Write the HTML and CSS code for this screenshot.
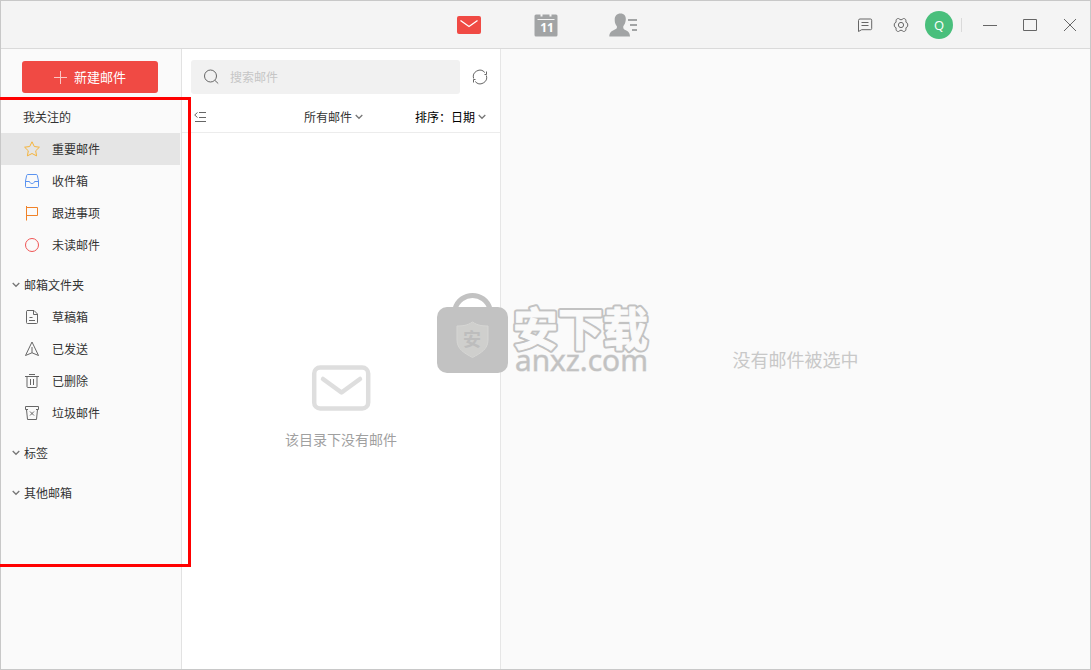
FILE: index.html
```html
<!DOCTYPE html>
<html lang="zh-CN">
<head>
<meta charset="utf-8">
<meta name="viewport" content="width=device-width, initial-scale=1">
<title>邮箱</title>
<link rel="stylesheet" href="styles.css">
</head>
<body>
<div class="window">
  <header class="titlebar">
    <nav class="tabs" aria-label="主导航">
      <button class="tab" aria-label="邮件">
        <svg width="24" height="18" viewBox="0 0 24 18"><rect width="24" height="18" rx="2" fill="#f04a44"/><path d="M3.500 4.500l8.500 6 8.500-6" fill="none" stroke="#fff" stroke-width="1.300"/></svg>
      </button>
      <button class="tab" aria-label="日历">
        <svg width="24" height="24" viewBox="0 0 24 24"><path d="M2 1.500h4.500v2h2v-2h7v2h2v-2H22a1.500 1.500 0 0 1 1.500 1.500v19a1.500 1.500 0 0 1-1.500 1.500H2A1.500 1.500 0 0 1 .5 22V3A1.500 1.500 0 0 1 2 1.500z" fill="#a2a4a5"/><path d="M3.500 6.500h17" stroke="#f4f4f4"/><text class="day" x="13" y="19" text-anchor="middle">11</text></svg>
      </button>
      <button class="tab" aria-label="联系人">
        <svg width="28" height="24" viewBox="0 0 28 24"><path d="M11.500.5c3.700 0 5.700 2.600 5.300 6.300-.2 3-1.500 5.200-2.500 6.500-.3 2.300.5 3 2 3.700 2.800 1.200 4.500 2.500 4.700 6.500H.3c.2-4 2-5.300 4.700-6.500 2-.8 3.300-1.500 2.900-3.700C6.500 11.500 5.700 9.800 5.700 7 5.600 3 7.800.5 11.500.5z" fill="#a2a4a5"/><path d="M19 7H28M21 12H28M23 17H28" stroke="#a2a4a5" stroke-width="2"/></svg>
      </button>
    </nav>
    <div class="actions">
      <button class="tool" aria-label="反馈">
        <svg class="line" width="16" height="16" viewBox="0 0 16 16"><path d="M3 2h10.500a1.200 1.200 0 0 1 1.200 1.200v8.300a1.200 1.200 0 0 1-1.200 1.200H4.700L1.500 14.500V3.500A1.500 1.500 0 0 1 3 2zM4.500 5.500h7M4.500 8.500h7"/></svg>
      </button>
      <button class="tool" aria-label="设置">
        <svg class="line" width="16" height="16" viewBox="0 0 16 16"><path d="M4.600 1.600Q5.500 1.200 6.200 2Q8 3.800 9.800 2Q10.500 1.200 11.400 1.600L12.600 2.400Q13.200 2.900 12.900 3.800Q12.500 5.700 14 6Q14.700 6.200 14.700 7V9Q14.700 9.800 14 10Q12.500 10.300 12.900 12.200Q13.200 13.100 12.600 13.600L11.400 14.400Q10.500 14.800 9.800 14Q8 12.200 6.200 14Q5.500 14.800 4.600 14.400L3.400 13.600Q2.800 13.100 3.100 12.200Q3.500 10.300 2 10Q1.300 9.800 1.300 9V7Q1.300 6.200 2 6Q3.500 5.700 3.100 3.800Q2.800 2.900 3.400 2.400z"/><circle cx="8" cy="8" r="2.600"/></svg>
      </button>
      <button class="avatar" aria-label="账户">Q</button>
      <span class="divider"></span>
      <button class="control" aria-label="最小化"><svg class="line" width="14" height="14" viewBox="0 0 14 14"><path d="M0 7.500h14"/></svg></button>
      <button class="control" aria-label="最大化"><svg class="line" width="14" height="14" viewBox="0 0 14 14"><path d="M.5 1.500h13v11H.5z"/></svg></button>
      <button class="control" aria-label="关闭"><svg class="line" width="14" height="14" viewBox="0 0 14 14"><path d="M1 1l12 12M13 1L1 13"/></svg></button>
    </div>
  </header>

  <div class="body">
    <aside class="sidebar">
      <button class="compose">
        <svg width="13" height="13" viewBox="0 0 13 13"><path d="M0 6.500h13M6.500 0v13" stroke="#fbc6c4"/></svg>
        新建邮件
      </button>

      <section class="group">
        <h2 class="heading pinned">我关注的</h2>
        <ul class="folders">
          <li><a class="folder active" href="#important"><svg class="line star" width="16" height="16" viewBox="0 0 16 16"><path d="M8 .8l2.300 4.700 5.100.7-3.700 3.600.9 5.100L8 12.500l-4.600 2.400.9-5.100L.6 6.200l5.100-.7z"/></svg>重要邮件</a></li>
          <li><a class="folder" href="#inbox"><svg class="line inbox" width="16" height="16" viewBox="0 0 16 16"><path d="M3.700 1.500h8.600a1 1 0 0 1 1 .8l1.200 5.700v5.500a1 1 0 0 1-1 1h-11a1 1 0 0 1-1-1V8l1.200-5.700a1 1 0 0 1 1-.8zM1.500 8.500h4c.4 2.700 4.600 2.700 5 0h4"/></svg>收件箱</a></li>
          <li><a class="folder" href="#follow"><svg class="line flag" width="16" height="16" viewBox="0 0 16 16"><path d="M2.500 1v14.500M2.500 2.500h11v8h-11"/></svg>跟进事项</a></li>
          <li><a class="folder" href="#unread"><svg class="line unread" width="16" height="16" viewBox="0 0 16 16"><circle cx="8" cy="8" r="6.500"/></svg>未读邮件</a></li>
        </ul>
      </section>

      <section class="group">
        <h2 class="heading"><svg class="line chevron" width="8" height="6" viewBox="0 0 8 6"><path d="M.7 1L4 4.300 7.300 1"/></svg>邮箱文件夹</h2>
        <ul class="folders">
          <li><a class="folder" href="#drafts"><svg class="line" width="16" height="16" viewBox="0 0 16 16"><path d="M3 1.500h7l3.500 3.500v8.500a1 1 0 0 1-1 1h-9a1 1 0 0 1-1-1v-11a1 1 0 0 1 .5-1zM9.500 1.500v4h4M5.500 8.500h3M5 11.500h6"/></svg>草稿箱</a></li>
          <li><a class="folder" href="#sent"><svg class="line" width="16" height="16" viewBox="0 0 16 16"><path d="M8 1l6.500 13.500L8.500 12h-1l-6 2.500zM8 6v6"/></svg>已发送</a></li>
          <li><a class="folder" href="#deleted"><svg class="line" width="16" height="16" viewBox="0 0 16 16"><path d="M1 3.500h14M5 1.500h6M3 3.500v10a1 1 0 0 0 1 1h8a1 1 0 0 0 1-1v-10M6.500 6v6M9.500 6v6"/></svg>已删除</a></li>
          <li><a class="folder" href="#junk"><svg class="line" width="16" height="16" viewBox="0 0 16 16"><path d="M4 4.500H1.500v-3h13v3H12M2.500 4.500l1 10h9l1-10M6 6.500l4 4M10 6.500l-4 4"/></svg>垃圾邮件</a></li>
        </ul>
      </section>

      <section class="group"><h2 class="heading"><svg class="line chevron" width="8" height="6" viewBox="0 0 8 6"><path d="M.7 1L4 4.300 7.300 1"/></svg>标签</h2></section>
      <section class="group"><h2 class="heading"><svg class="line chevron" width="8" height="6" viewBox="0 0 8 6"><path d="M.7 1L4 4.300 7.300 1"/></svg>其他邮箱</h2></section>
    </aside>

    <main class="list">
      <div class="searchrow">
        <label class="search">
          <svg class="line" width="16" height="16" viewBox="0 0 16 16"><circle cx="7.500" cy="7" r="6"/><path d="M12 11.500l3.200 3"/></svg>
          <input type="search" placeholder="搜索邮件" aria-label="搜索邮件">
        </label>
        <button class="refresh" aria-label="刷新"><svg class="line" width="16" height="16" viewBox="0 0 16 16"><path d="M1.600 9.500A6.500 6.500 0 0 1 12.800 3.500M14.400 6.500A6.500 6.500 0 0 1 3.200 12.500M14.500 2.500v3h-2M1.500 13.500v-3h2"/></svg></button>
      </div>
      <div class="filters">
        <button class="collapse" aria-label="收起"><svg class="line" width="14" height="12" viewBox="0 0 14 12"><path d="M3.500 1.500L.7 4l2.800 2.500M5 1.500h7M5 6.500h7M1 10.500h11"/></svg></button>
        <label class="picker">
          <select aria-label="筛选"><option>所有邮件</option></select>
          <svg class="line chevron" width="8" height="6" viewBox="0 0 8 6"><path d="M.7 1L4 4.300 7.300 1"/></svg>
        </label>
        <label class="picker sort">
          <select aria-label="排序"><option>排序：日期</option></select>
          <svg class="line chevron" width="8" height="6" viewBox="0 0 8 6"><path d="M.7 1L4 4.300 7.300 1"/></svg>
        </label>
      </div>
      <div class="empty">
        <svg width="60" height="46" viewBox="0 0 60 46" fill="none" stroke="#dedede" stroke-width="4.500" stroke-linecap="round" stroke-linejoin="round"><rect x="3.200" y="2.500" width="54" height="41" rx="6"/><path d="M12 14l18.500 13.500L49 14"/></svg>
        <p>该目录下没有邮件</p>
      </div>
    </main>

    <section class="reader"><p>没有邮件被选中</p></section>
  </div>

  <div class="highlight"></div>
  <svg class="watermark" width="220" height="96" viewBox="0 0 220 96" role="img" aria-label="安下载 anxz.com">
    <path d="M19 17C24-1 49-1 54 17" fill="none" stroke="#c2c2c2" stroke-width="5"/>
    <rect x="1" y="15" width="71" height="66" rx="10" fill="#c2c2c2"/>
    <path d="M36.500 30c5 3.500 10 4 15.500 4v14c0 9-7 13-15.500 17.500C28 61 21 57 21 48V34c5.500 0 10.500-.5 15.500-4z" fill="#cfcfcd" stroke="#d6d6d4"/>
    <text class="shield" x="36" y="54" text-anchor="middle">安</text>
    <g class="outer"><text id="brand" x="77" y="54">安下载</text></g>
    <use class="inner" href="#brand"/>
    <text class="domain" x="79" y="79">anxz.com</text>
  </svg>
</div>
</body>
</html>
```
FILE: styles.css
```css
* { box-sizing: border-box; }

body {
  margin: 0;
  font: 12px/20px "Noto Sans CJK SC", sans-serif;
  color: #333;
}

h2, p, ul { margin: 0; padding: 0; font: inherit; }
ul { list-style: none; }
svg { display: block; flex: none; }

button {
  display: flex;
  align-items: center;
  justify-content: center;
  margin: 0;
  padding: 0;
  border: 0;
  background: none;
  font: inherit;
  color: inherit;
}

.line { fill: none; stroke: #666; }
.chevron { stroke: #777; stroke-width: 1.3; }

.window {
  position: relative;
  display: flex;
  flex-direction: column;
  min-height: 100vh;
  border: 1px solid #c8c8c8;
  background: #fafafa;
}

/* Title bar */
.titlebar {
  display: grid;
  grid-template-columns: 1fr auto 1fr;
  align-items: center;
  height: 48px;
  border-bottom: 1px solid #dadada;
  background: #f4f4f4;
}
.tabs { grid-column: 2; display: flex; gap: 49px; }
.tab { width: 28px; height: 28px; }
.day { font: bold 12px "Open Sans", sans-serif; fill: #fff; }
.actions { display: flex; align-items: center; justify-content: flex-end; }
.tool { width: 36px; height: 36px; }
.avatar {
  width: 28px;
  height: 28px;
  margin: 0 8px 0 6px;
  border-radius: 50%;
  background: #49bf7c;
  color: #fff;
  font: 13px "Open Sans", sans-serif;
}
.divider { width: 1px; height: 14px; margin-right: 8px; background: #dadada; }
.control { width: 40px; height: 40px; }

/* Columns */
.body {
  flex: 1;
  display: grid;
  grid-template-columns: 181px 319px 1fr;
}

/* Sidebar */
.sidebar { padding-top: 12px; border-right: 1px solid #e2e2e2; }
.compose {
  gap: 7px;
  width: 136px;
  height: 32px;
  margin-left: 21px;
  border-radius: 3px;
  background: #f04a44;
  color: #fff;
  font-size: 13px;
}
.group { margin-top: 8px; }
.heading {
  display: flex;
  align-items: center;
  gap: 4px;
  height: 32px;
  padding-left: 11px;
}
.pinned { padding-left: 22px; }
.folder {
  display: flex;
  align-items: center;
  gap: 12px;
  height: 32px;
  margin-right: 1px;
  padding-left: 23px;
  color: inherit;
  text-decoration: none;
}
.active { background: #e5e5e5; }
.star { stroke: #f5b43c; }
.inbox { stroke: #5a93f0; }
.flag { stroke: #f08228; }
.unread { stroke: #f05555; }

/* Message list */
.list {
  display: flex;
  flex-direction: column;
  border-right: 1px solid #e6e6e6;
  background: #fff;
}
.searchrow { display: flex; gap: 12px; padding: 11px 12px 7px 9px; }
.search {
  flex: 1;
  display: flex;
  align-items: center;
  gap: 11px;
  height: 34px;
  padding: 0 12px;
  border-radius: 3px;
  background: #f1f1f1;
}
.search input {
  flex: 1;
  min-width: 0;
  padding: 0;
  border: 0;
  outline: 0;
  background: none;
  font: inherit;
}
.search input::placeholder { color: #c6c6c6; }
.filters {
  display: flex;
  align-items: center;
  height: 32px;
  padding: 0 14px 0 12px;
  border-bottom: 1px solid #ececec;
}
.picker { display: flex; align-items: center; gap: 2px; margin-left: auto; }
.sort { margin-left: 52px; color: #000; }
.picker select {
  appearance: none;
  padding: 0;
  border: 0;
  background: none;
  font: inherit;
  color: inherit;
}
.empty {
  flex: 1;
  display: flex;
  flex-direction: column;
  align-items: center;
  gap: 18px;
  padding-top: 232px;
  color: #a0a0a0;
  font-size: 14px;
}

/* Reading pane */
.reader {
  display: flex;
  align-items: center;
  justify-content: center;
  color: #c8c8c8;
  font-size: 18px;
}

/* Overlays */
.highlight {
  position: absolute;
  top: 96px;
  left: -1px;
  width: 191px;
  height: 470px;
  border: 3px solid #f00;
  border-left: 0;
  pointer-events: none;
}
.watermark {
  position: absolute;
  top: 291px;
  left: 435px;
  overflow: visible;
  pointer-events: none;
}
.outer, .inner { font: bold 45px "Noto Sans CJK SC", sans-serif; stroke-linejoin: round; }
.outer { fill: #c2c2c2; stroke: #c2c2c2; stroke-width: 5px; }
.inner { fill: #fafafa; stroke: #fafafa; stroke-width: 1px; }
.shield { font: bold 18px "Noto Sans CJK SC", sans-serif; fill: #bdbdbd; }
.domain {
  font: 30px "Open Sans", sans-serif;
  fill: #c2c2c2;
  stroke: #c2c2c2;
  stroke-opacity: 0.6;
}
```
